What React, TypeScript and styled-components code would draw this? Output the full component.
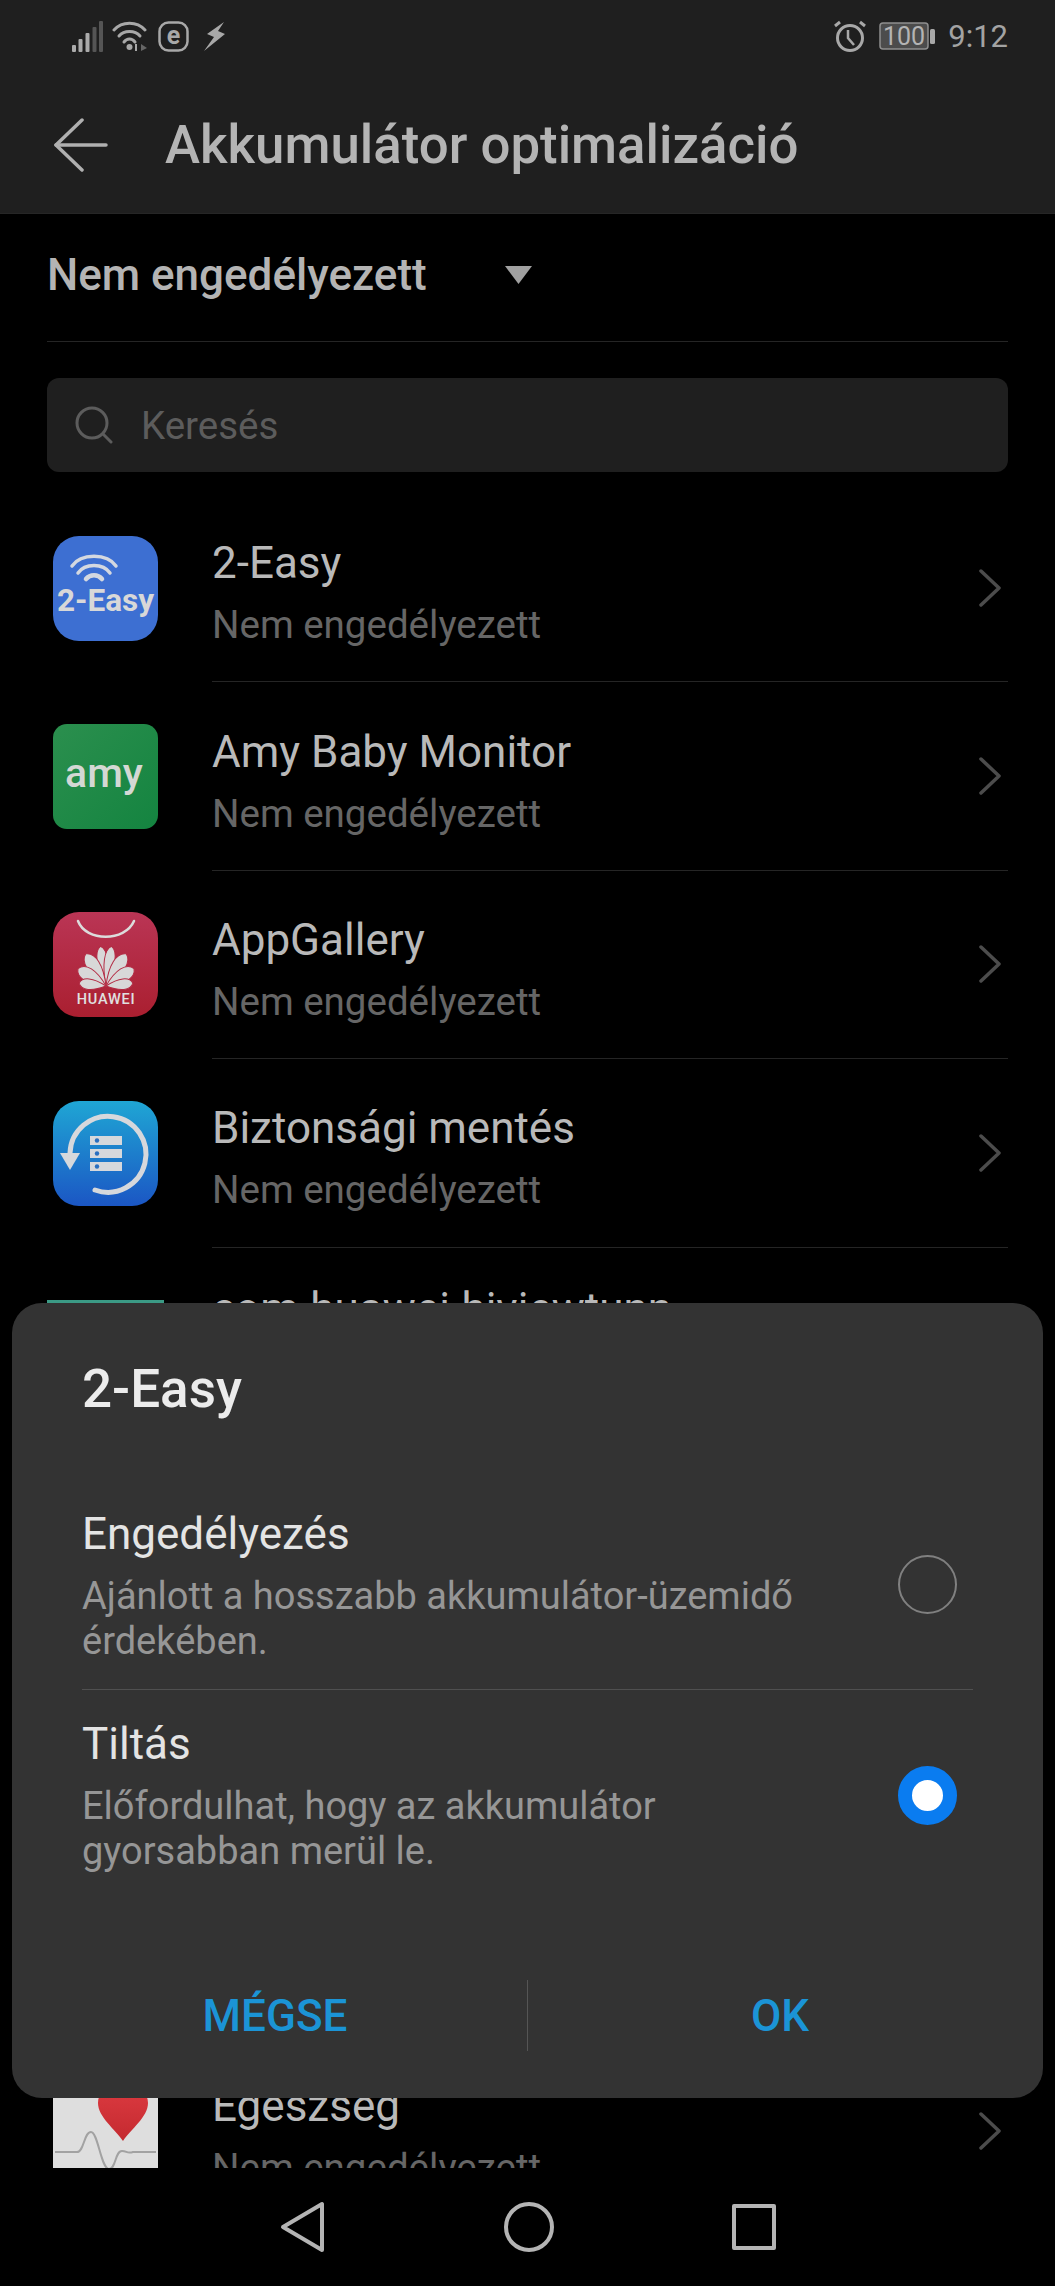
import styled, { createGlobalStyle } from "styled-components";

const GlobalStyle = createGlobalStyle`
  html, body {
    margin: 0;
    padding: 0;
    background: #000;
  }
  * {
    box-sizing: border-box;
  }
`;

const Page = styled.div`
  position: relative;
  display: flex;
  flex-direction: column;
  width: 1055px;
  height: 2286px;
  overflow: hidden;
  background: #000;
  font-family: Roboto, "Noto Sans", sans-serif;
`;

const AppBar = styled.header`
  flex: none;
  height: 214px;
  background: #1f1f1f;
  border-bottom: 1px solid #262626;
`;

const StatusBar = styled.div`
  display: flex;
  justify-content: space-between;
  align-items: center;
  height: 72px;
  padding: 0 47px 0 72px;
`;

const StatusGroup = styled.div`
  display: flex;
  align-items: center;
  gap: ${(props: { $gap: number }) => props.$gap}px;
`;

const Clock = styled.span`
  font-size: 31px;
  color: #a3a3a3;
  line-height: 1;
`;

const TitleRow = styled.div`
  display: flex;
  align-items: center;
  height: 72px;
  margin-top: 37px;
  padding-left: 54px;
`;

const Title = styled.h1`
  margin: 0 0 0 57px;
  font-size: 52.8px;
  font-weight: 500;
  color: #b4b4b4;
  white-space: nowrap;
`;

const FilterBar = styled.div`
  flex: none;
  display: flex;
  align-items: center;
  height: 128px;
  margin: 0 47px;
  padding-bottom: 6px;
  border-bottom: 1px solid #252525;
`;

const FilterLabel = styled.span`
  width: 458px;
  font-size: 44px;
  font-weight: 500;
  color: #b4b4b4;
`;

const SearchBox = styled.div`
  flex: none;
  display: flex;
  align-items: center;
  height: 94px;
  margin: 36px 47px 0;
  padding-left: 28px;
  background: #1f1f1f;
  border-radius: 12px;
`;

const SearchText = styled.span`
  margin: 1px 0 0 28px;
  font-size: 38.5px;
  color: #5c5c5c;
`;

const AppList = styled.div`
  flex: 1;
  min-height: 0;
  padding-top: 22px;
  overflow: hidden;
`;

const AppRow = styled.div`
  display: flex;
  align-items: center;
  height: 188.4px;
  padding-left: 53px;
`;

const HiddenRows = styled.div`
  height: 601px;
`;

const IconSlot = styled.div`
  flex: none;
  display: flex;
  justify-content: center;
  width: 105px;
  height: 105px;

  & > svg {
    flex: none;
  }
`;

const RowBody = styled.div`
  flex: none;
  display: flex;
  align-items: center;
  justify-content: space-between;
  align-self: stretch;
  width: 796px;
  margin-left: 54px;
  padding-right: 6px;
  border-bottom: 1px solid ${(props: { $last?: boolean }) => (props.$last ? "transparent" : "#252525")};
`;

const RowText = styled.div`
  display: flex;
  flex-direction: column;
  margin-top: ${(props: { $raised?: boolean }) => (props.$raised ? -5 : 11)}px;
`;

const RowTitle = styled.span`
  font-size: 44px;
  line-height: 56px;
  color: #b9b9b9;
  white-space: nowrap;
`;

const RowSub = styled.span`
  margin-top: 8px;
  font-size: 38.5px;
  line-height: 52px;
  color: #666;
  white-space: nowrap;
`;

const NavBar = styled.nav`
  flex: none;
  display: flex;
  align-items: center;
  justify-content: center;
  gap: 178px;
  height: 118px;
  background: #000;
`;

const Dialog = styled.section`
  position: absolute;
  left: 12px;
  top: 1303px;
  display: flex;
  flex-direction: column;
  width: 1031px;
  height: 795px;
  padding: 0 70px;
  background: #333;
  border-radius: 30px;
`;

const DialogTitle = styled.h2`
  margin: 55px 0 60px;
  font-size: 53px;
  line-height: 62px;
  font-weight: 500;
  color: #ececec;
`;

const Option = styled.div`
  display: flex;
  align-items: center;
  justify-content: space-between;
  height: ${(props: { $height: number }) => props.$height}px;
  padding-right: 16px;
  border-bottom: 1px solid ${(props: { $divider?: boolean }) => (props.$divider ? "#505050" : "transparent")};
`;

const OptionText = styled.div`
  display: flex;
  flex-direction: column;
`;

const OptionTitle = styled.span`
  font-size: 44px;
  line-height: 56px;
  color: #e4e4e4;
`;

const OptionSub = styled.span`
  margin-top: 12px;
  font-size: 38px;
  line-height: 45px;
  color: #969696;
`;

const Radio = styled.div<{ $checked?: boolean }>`
  flex: none;
  width: 59px;
  height: 59px;
  border-radius: 50%;
  border: ${(props) => (props.$checked ? "14.5px solid #0a7cf0" : "2px solid #808080")};
  background: ${(props) => (props.$checked ? "#fff" : "transparent")};
`;

const DialogActions = styled.div`
  position: absolute;
  left: 0;
  right: 0;
  top: 677px;
  display: flex;
  align-items: center;
  height: 71px;
  padding: 0 11px;
`;

const ActionButton = styled.button`
  flex: 1;
  padding: 0;
  border: none;
  background: none;
  font-family: inherit;
  font-size: 44px;
  font-weight: 500;
  color: #1b94d6;
`;

const ActionDivider = styled.div`
  flex: none;
  width: 1px;
  height: 71px;
  background: #555;
`;

const signalBars = [
  { x: 0, y: 24, fill: "#ababab" },
  { x: 6.5, y: 18, fill: "#ababab" },
  { x: 13.5, y: 12, fill: "#ababab" },
  { x: 20.5, y: 6, fill: "#555" },
  { x: 27, y: 0, fill: "#555" },
];

const SignalIcon = () => (
  <svg width="31" height="31" viewBox="0 0 31 31">
    {signalBars.map((bar) => (
      <rect key={bar.x} x={bar.x} y={bar.y} width="4" height={31 - bar.y} rx="1" fill={bar.fill} />
    ))}
  </svg>
);

const WifiIcon = () => (
  <svg width="37" height="32" viewBox="0 0 37 32" fill="none" stroke="#a8a8a8" strokeWidth="3" strokeLinecap="round">
    <path d="M2 10 C10 1 25 1 33 10" />
    <path d="M7 16 C12 10 23 10 28 16" />
    <path d="M12 22 C15 18 20 18 23 22" />
    <circle cx="17.5" cy="27" r="3" fill="#a8a8a8" stroke="none" />
    <path d="M24 24 V31" strokeWidth="2" strokeLinecap="butt" />
    <path d="M29 24 L35 28 L29 31 Z" fill="#666" stroke="none" />
  </svg>
);

const EdgeIcon = () => (
  <svg width="31" height="31" viewBox="0 0 31 31">
    <rect x="1.5" y="1.5" width="28" height="28" rx="9" fill="none" stroke="#a8a8a8" strokeWidth="2.5" />
    <text x="15.5" y="23" textAnchor="middle" fontFamily="Roboto, sans-serif" fontSize="25" fontWeight="700" fill="#a8a8a8">
      e
    </text>
  </svg>
);

const BoltIcon = () => (
  <svg width="27" height="29" viewBox="-6 0 27 29">
    <path d="M20 0 L3 12 L10 15 L0 29 L21 12 L14 9 Z" fill="#a8a8a8" />
  </svg>
);

const AlarmIcon = () => (
  <svg width="32" height="33" viewBox="0 0 32 33" fill="none" stroke="#a8a8a8">
    <circle cx="16" cy="18" r="12.5" strokeWidth="3" />
    <path d="M14 10 V18 L20 25" strokeWidth="2.5" />
    <path d="M1 6 L6 2 M31 6 L26 2" strokeWidth="3" />
  </svg>
);

const BatteryIcon = () => (
  <svg width="56" height="28" viewBox="0 0 56 28">
    <rect x="1" y="1" width="48" height="26" rx="3" fill="#4c4c4c" stroke="#8f8f8f" strokeWidth="1.5" />
    <rect x="51" y="7" width="5" height="15" rx="1.5" fill="#a8a8a8" />
    <text x="25" y="23" textAnchor="middle" fontFamily="Roboto, sans-serif" fontSize="25" fill="#b4b4b4">
      100
    </text>
  </svg>
);

const BackArrow = () => (
  <svg width="54" height="54" viewBox="0 0 54 54" fill="none" stroke="#b0b0b0" strokeWidth="3.5" strokeLinecap="round" strokeLinejoin="round">
    <path d="M28 2 L2 27 L28 52" />
    <path d="M2 27 H52" />
  </svg>
);

const DropdownArrow = () => (
  <svg width="27" height="18" viewBox="0 0 27 18">
    <path d="M0 0 H27 L13.5 18 Z" fill="#a0a0a0" />
  </svg>
);

const SearchIcon = () => (
  <svg width="38" height="38" viewBox="0 0 38 38" fill="none" stroke="#5c5c5c" strokeWidth="3" strokeLinecap="round">
    <circle cx="17" cy="17" r="15" />
    <path d="M28 28 L36 36" />
  </svg>
);

const Chevron = () => (
  <svg width="24" height="38" viewBox="0 0 24 38" fill="none" stroke="#4c4c4c" strokeWidth="3.5" strokeLinecap="round" strokeLinejoin="round">
    <path d="M3 2 L21 19 L3 36" />
  </svg>
);

const EasyIcon = () => (
  <svg width="105" height="105" viewBox="0 0 105 105">
    <rect width="105" height="105" rx="26" fill="#3d6fd2" />
    <g fill="none" stroke="#d4d8e0" strokeWidth="3.5" strokeLinecap="round">
      <path d="M19 30 C28 17 54 17 63 30" />
      <path d="M25 37 C32 27 50 27 57 37" />
      <path d="M33 43 C37 38 45 38 49 43" strokeWidth="4.5" />
    </g>
    <text x="52.5" y="75" textAnchor="middle" fontFamily="Roboto, sans-serif" fontSize="31.5" fontWeight="700" fill="#d8d8d8">
      2-Easy
    </text>
  </svg>
);

const AmyIcon = () => (
  <svg width="105" height="105" viewBox="0 0 105 105">
    <defs>
      <linearGradient id="amyBg" x1="0" y1="0" x2="1" y2="1">
        <stop offset="0" stopColor="#2b8f4e" />
        <stop offset="1" stopColor="#148440" />
      </linearGradient>
    </defs>
    <rect width="105" height="105" rx="14" fill="url(#amyBg)" />
    <text x="51" y="63" textAnchor="middle" fontFamily="Roboto, sans-serif" fontSize="41" fontWeight="500" fill="#d4d8d4">
      amy
    </text>
  </svg>
);

const petals = [
  { angle: 8, length: 40, width: 7 },
  { angle: 32, length: 38, width: 9 },
  { angle: 58, length: 33, width: 9 },
  { angle: 84, length: 27, width: 7 },
];

const petalPath = (length: number, width: number) =>
  `M0 0 C${-width} ${-length * 0.5} ${-width} ${-length * 0.9} 0 ${-length} C${width} ${-length * 0.9} ${width} ${-length * 0.5} 0 0 Z`;

const GalleryIcon = () => (
  <svg width="105" height="105" viewBox="0 0 105 105">
    <defs>
      <linearGradient id="galleryBg" x1="0" y1="0" x2="0" y2="1">
        <stop offset="0" stopColor="#ba3555" />
        <stop offset="1" stopColor="#aa1f30" />
      </linearGradient>
    </defs>
    <rect width="105" height="105" rx="26" fill="url(#galleryBg)" />
    <path d="M25 9 C33 30 72 30 81 9" fill="none" stroke="#dcdcdc" strokeWidth="2.5" strokeLinecap="round" />
    <g transform="translate(53 74)">
      {petals.flatMap((petal) =>
        [-1, 1].map((side) => (
          <path
            key={petal.angle * side}
            d={petalPath(petal.length, petal.width)}
            fill="#d8d8d8"
            stroke="#b32a43"
            strokeWidth="1"
            transform={`rotate(${petal.angle * side})`}
          />
        )),
      )}
    </g>
    <text x="53" y="92" textAnchor="middle" fontFamily="Roboto, sans-serif" fontSize="14.5" fontWeight="500" letterSpacing="0.8" fill="#e0e0e0">
      HUAWEI
    </text>
  </svg>
);

const BackupIcon = () => (
  <svg width="105" height="105" viewBox="0 0 105 105">
    <defs>
      <linearGradient id="backupBg" x1="0" y1="0" x2="0" y2="1">
        <stop offset="0" stopColor="#1fa6d4" />
        <stop offset="1" stopColor="#1b56c4" />
      </linearGradient>
    </defs>
    <rect width="105" height="105" rx="26" fill="url(#backupBg)" />
    <path d="M42 89 A38 38 0 1 0 17 52" fill="none" stroke="#d6d8dc" strokeWidth="5" strokeLinecap="round" />
    <path d="M7 52 H27 L17 69 Z" fill="#d6d8dc" />
    {[35, 48, 61].map((y) => (
      <g key={y}>
        <rect x="37" y={y} width="32" height="9" fill="#d6d8dc" />
        <circle cx="44" cy={y + 4.5} r="2.2" fill="#2a6fc0" />
      </g>
    ))}
  </svg>
);

const HealthIcon = () => (
  <svg width="105" height="105" viewBox="0 0 105 105">
    <defs>
      <linearGradient id="heartFill" x1="0" y1="0" x2="0" y2="1">
        <stop offset="0" stopColor="#dc3a40" />
        <stop offset="1" stopColor="#c42a30" />
      </linearGradient>
    </defs>
    <rect width="105" height="105" fill="#dedede" />
    <path d="M70 62 C62 50 45 38 45 24 C45 8 64 2 70 14 C76 2 95 8 95 24 C95 38 78 50 70 62 Z" fill="url(#heartFill)" />
    <path d="M2 73 H24 C31 73 31 53 38 53 C45 53 48 90 56 90 C63 90 62 72 69 72 C74 72 74 75 80 73 H103" fill="none" stroke="#a2a2a2" strokeWidth="2" />
  </svg>
);

const TunnelIcon = () => (
  <svg width="117" height="105" viewBox="0 0 117 105">
    <rect x="0" y="11" width="117" height="80" fill="#dedede" />
    <rect x="0" y="11" width="117" height="3" fill="#3b9a85" />
  </svg>
);

const apps = [
  { name: "2-Easy", icon: <EasyIcon /> },
  { name: "Amy Baby Monitor", icon: <AmyIcon /> },
  { name: "AppGallery", icon: <GalleryIcon /> },
  { name: "Biztonsági mentés", icon: <BackupIcon /> },
  { name: "com.huawei.hiviewtunn", icon: <TunnelIcon />, raised: true },
];

const App = () => {
  return (
    <Page>
      <GlobalStyle />
      <AppBar>
        <StatusBar>
          <StatusGroup $gap={9}>
            <SignalIcon />
            <WifiIcon />
            <EdgeIcon />
            <BoltIcon />
          </StatusGroup>
          <StatusGroup $gap={13}>
            <AlarmIcon />
            <BatteryIcon />
            <Clock>9:12</Clock>
          </StatusGroup>
        </StatusBar>
        <TitleRow>
          <BackArrow />
          <Title>Akkumulátor optimalizáció</Title>
        </TitleRow>
      </AppBar>

      <FilterBar>
        <FilterLabel>Nem engedélyezett</FilterLabel>
        <DropdownArrow />
      </FilterBar>

      <SearchBox>
        <SearchIcon />
        <SearchText>Keresés</SearchText>
      </SearchBox>

      <AppList>
        {apps.map((app) => (
          <AppRow key={app.name}>
            <IconSlot>{app.icon}</IconSlot>
            <RowBody>
              <RowText $raised={app.raised}>
                <RowTitle>{app.name}</RowTitle>
                <RowSub>Nem engedélyezett</RowSub>
              </RowText>
              <Chevron />
            </RowBody>
          </AppRow>
        ))}
        <HiddenRows />
        <AppRow>
          <IconSlot>
            <HealthIcon />
          </IconSlot>
          <RowBody $last>
            <RowText>
              <RowTitle>Egészség</RowTitle>
              <RowSub>Nem engedélyezett</RowSub>
            </RowText>
            <Chevron />
          </RowBody>
        </AppRow>
      </AppList>

      <NavBar>
        <svg width="46" height="52" viewBox="0 0 46 52" fill="none" stroke="#b4b4b4" strokeWidth="4" strokeLinejoin="round">
          <path d="M42 3 V49 L3 26 Z" />
        </svg>
        <svg width="50" height="50" viewBox="0 0 50 50" fill="none" stroke="#b4b4b4" strokeWidth="4">
          <circle cx="25" cy="25" r="23" />
        </svg>
        <svg width="44" height="46" viewBox="0 0 44 46" fill="none" stroke="#b4b4b4" strokeWidth="4" strokeLinejoin="round">
          <rect x="2" y="2" width="40" height="42" />
        </svg>
      </NavBar>

      <Dialog>
        <DialogTitle>2-Easy</DialogTitle>
        <Option $height={210} $divider>
          <OptionText>
            <OptionTitle>Engedélyezés</OptionTitle>
            <OptionSub>
              Ajánlott a hosszabb akkumulátor-üzemidő
              <br />
              érdekében.
            </OptionSub>
          </OptionText>
          <Radio />
        </Option>
        <Option $height={211}>
          <OptionText>
            <OptionTitle>Tiltás</OptionTitle>
            <OptionSub>
              Előfordulhat, hogy az akkumulátor
              <br />
              gyorsabban merül le.
            </OptionSub>
          </OptionText>
          <Radio $checked />
        </Option>
        <DialogActions>
          <ActionButton>MÉGSE</ActionButton>
          <ActionDivider />
          <ActionButton>OK</ActionButton>
        </DialogActions>
      </Dialog>
    </Page>
  );
};

export default App;
